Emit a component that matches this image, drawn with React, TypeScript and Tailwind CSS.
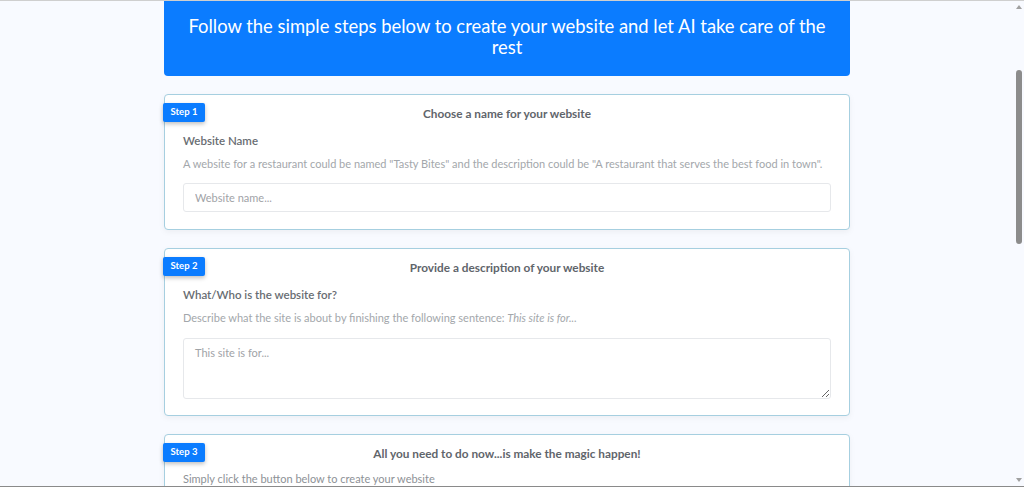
import React from "react";

const font = { fontFamily: 'Lato, "Open Sans", "Noto Sans", sans-serif' };

function Badge({ n }: { n: number }) {
  return (
    <div className="absolute left-[-2px] top-[8px] flex h-[19px] w-[42px] items-center justify-center rounded-[2px] bg-[#0b7cff] text-[9.5px] font-bold text-white shadow-[0_2px_4px_rgba(0,0,0,0.25)]">
      Step {n}
    </div>
  );
}

function Card({ children, n, title, pb }: { children?: React.ReactNode; n: number; title: string; pb: string }) {
  return (
    <div className={"relative rounded-[4px] border border-[#a6cfe0] bg-white px-[18px] pt-[10px] shadow-[0_2px_6px_rgba(0,0,0,0.05)] " + pb}>
      <Badge n={n} />
      <div className="flex h-[18px] items-center justify-center text-[11.8px] font-bold text-[#5f656b]">{title}</div>
      {children}
    </div>
  );
}

export default function App() {
  return (
    <div className="flex h-[487px] w-full overflow-hidden border-t border-b border-t-[#cfcfcf] border-b-[#8a8a8a] bg-[#f8faff]" style={font}>
      <div className="flex-1 overflow-hidden">
        <div className="mx-auto flex w-[686px] flex-col gap-[18px]">
          <div className="flex h-[76px] mt-[-1px] items-center justify-center rounded-b-[4px] bg-[#0b7cff] px-[10px] text-center text-[18.4px] leading-[21px] whitespace-nowrap text-white">
            <div className="pb-[2px]">
              Follow the simple steps below to create your website and let AI take care of the
              <br />
              rest
            </div>
          </div>
          <Card n={1} title="Choose a name for your website" pb="pb-[17px]">
            <div className="mt-[9px] text-[11.5px] font-semibold text-[#686d72]">Website Name</div>
            <div className="mt-[7px] text-[11px] text-[#a3a7ab]">
              A website for a restaurant could be named "Tasty Bites" and the description could be "A restaurant that serves the best food in town".
            </div>
            <input
              className="mt-[10px] block h-[29px] w-full rounded-[3px] border border-[#e6e8eb] px-[11px] text-[11px] text-[#555] placeholder:text-[#9fa3a7] outline-none"
              placeholder="Website name..."
            />
          </Card>
          <Card n={2} title="Provide a description of your website" pb="pb-[16px]">
            <div className="mt-[9px] text-[11.5px] font-semibold text-[#686d72]">What/Who is the website for?</div>
            <div className="mt-[7px] text-[11px] text-[#a3a7ab]">
              Describe what the site is about by finishing the following sentence: <i>This site is for...</i>
            </div>
            <textarea
              className="mt-[11px] block h-[61px] w-full rounded-[3px] border border-[#e6e8eb] px-[11px] py-[6px] text-[11px] text-[#555] placeholder:text-[#9fa3a7] outline-none"
              placeholder="This site is for..."
            />
          </Card>
          <Card n={3} title="All you need to do now...is make the magic happen!" pb="pb-[17px]">
            <div className="mt-[8px] text-[11px] text-[#8d9196]">Simply click the button below to create your website</div>
            <div className="h-[60px]" />
          </Card>
        </div>
      </div>
      <div className="flex w-[10px] flex-col items-center bg-[#f8faff]">
        <div className="mt-[4px] h-0 w-0 border-x-[3px] border-b-[4px] border-x-transparent border-b-[#a0a0a0]" />
        <div className="mt-[61px] h-[174px] w-[6px] rounded-[3px] bg-[#8c8c8c]" />
        <div className="flex-1" />
        <div className="mb-[4px] h-0 w-0 border-x-[3px] border-t-[4px] border-x-transparent border-t-[#a0a0a0]" />
      </div>
    </div>
  );
}
